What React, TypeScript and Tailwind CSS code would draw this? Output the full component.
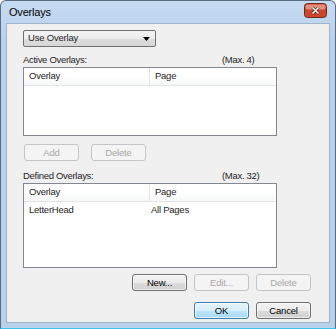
import React from "react";

const font = { fontFamily: '"Liberation Sans", Arial, sans-serif' };

const Btn = ({
  label,
  disabled,
  primary,
}: {
  label: string;
  disabled?: boolean;
  primary?: boolean;
}) => {
  let cls =
    "w-[55px] h-[17px] rounded-[3px] border flex items-center justify-center text-[9.5px] tracking-[-0.2px] leading-none ";
  if (disabled) {
    cls += "border-[#c2c5c8] bg-[#f4f4f4] text-[#a8a8a8]";
  } else if (primary) {
    cls +=
      "border-[#3c7fb1] bg-[linear-gradient(#e5f4fc_0%,#d8effa_50%,#bee6fd_51%,#a7d9f5_100%)] text-black shadow-[inset_0_0_0_1px_#ffffffaa]";
  } else {
    cls +=
      "border-[#707070] bg-[linear-gradient(#f2f2f2_0%,#ebebeb_50%,#dddddd_51%,#cfcfcf_100%)] text-black shadow-[inset_0_0_0_1px_#ffffffaa]";
  }
  return <div className={cls}>{label}</div>;
};

const ListBox = ({
  height,
  rows,
}: {
  height: string;
  rows: [string, string][];
}) => (
  <div className={`w-[254px] ${height} border border-[#828790] bg-white flex flex-col`}>
    <div className="h-[18px] flex border-b border-[#e5e5e5] bg-[linear-gradient(#ffffff_0%,#ffffff_50%,#f6f7f8_100%)] text-[9.5px] tracking-[-0.25px] text-[#1e1e1e]">
      <div className="w-[126px] border-r border-[#e5e5e5] pl-[5px] flex items-center">Overlay</div>
      <div className="flex-1 pl-[5px] flex items-center">Page</div>
    </div>
    {rows.map(([a, b]) => (
      <div key={a} className="h-[17px] flex items-center text-[9.5px] tracking-[-0.25px] text-[#1e1e1e]">
        <div className="w-[127px] pl-[5px]">{a}</div>
        <div className="flex-1">{b}</div>
      </div>
    ))}
  </div>
);

// Win7-style red close button
const CloseIcon = () => (
  <svg width="23" height="15" viewBox="0 0 23 15" className="-mt-1 block">
    <rect x="0.5" y="0.5" width="22" height="14" rx="3" fill="#c9452c" stroke="#6e2a20" />
    <rect x="1.5" y="1.5" width="20" height="5" rx="2" fill="#e38f7c" />
    <path d="M8.5 4.5 L14.5 10.5 M14.5 4.5 L8.5 10.5" stroke="#4a1a12" strokeWidth="2.8" />
    <path d="M8.5 4.5 L14.5 10.5 M14.5 4.5 L8.5 10.5" stroke="#ffffff" strokeWidth="1.6" />
  </svg>
);

const App = () => {
  return (
    <div
      style={font}
      className="w-[336px] h-[329px] flex flex-col rounded-t-[6px] border border-[#5b6b7e] border-b-[#3fc4ee] bg-[linear-gradient(#c6dbf2_0%,#b9d1ea_12%,#b9d1ea_100%)]"
    >
      {/* Title bar */}
      <div className="h-[22px] flex items-center justify-between pl-[8px] pr-[8px]">
        <span className="text-[11px] tracking-[-0.2px] text-black">Overlays</span>
        <CloseIcon />
      </div>

      {/* Client area */}
      <div className="flex-1 mx-[5px] mb-[5px] bg-[#f0f0f0] border border-[#a0b4c8] pl-[16px] pt-[6px] flex flex-col text-[#1e1e1e]">
        <div className="w-[133px] h-[17px] rounded-[2px] border border-[#707070] bg-[linear-gradient(#f4f4f4_0%,#ececec_50%,#dedede_51%,#d6d6d6_100%)] flex items-center justify-between pl-[4px] pr-[5px] text-[9.5px] tracking-[-0.2px]">
          <span>Use Overlay</span>
          <svg width="7" height="4" viewBox="0 0 7 4">
            <path d="M0 0 H7 L3.5 4 Z" fill="#000" />
          </svg>
        </div>

        <div className="mt-[7px] w-[254px] h-[13px] flex items-center text-[9.5px] tracking-[-0.3px]">
          <span className="w-[199px]">Active Overlays:</span>
          <span>(Max. 4)</span>
        </div>
        <ListBox height="h-[69px]" rows={[]} />

        <div className="mt-[8px] flex gap-[12px] pl-[1px]">
          <Btn label="Add" disabled />
          <Btn label="Delete" disabled />
        </div>

        <div className="mt-[9px] w-[254px] h-[13px] flex items-center text-[9.5px] tracking-[-0.3px]">
          <span className="w-[199px]">Defined Overlays:</span>
          <span>(Max. 32)</span>
        </div>
        <ListBox height="h-[85px]" rows={[["LetterHead", "All Pages"]]} />

        <div className="mt-[6px] w-[288px] flex justify-end gap-[7px]">
          <Btn label="New..." />
          <Btn label="Edit..." disabled />
          <Btn label="Delete" disabled />
        </div>

        <div className="mt-[11px] w-[288px] flex justify-end gap-[7px]">
          <Btn label="OK" primary />
          <Btn label="Cancel" />
        </div>
      </div>
    </div>
  );
};

export default App;
